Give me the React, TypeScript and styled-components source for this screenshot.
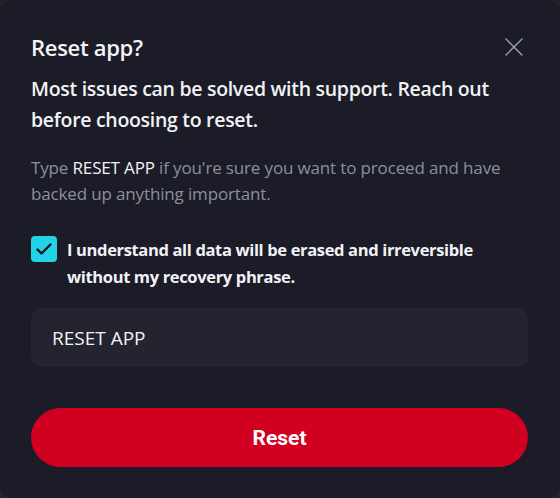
import React, { useState } from "react";
import styled, { createGlobalStyle } from "styled-components";

const Global = createGlobalStyle`
  html, body { margin: 0; padding: 0; background: #23242d; }
  body { font-family: "Open Sans", "Noto Sans", sans-serif; }
  * { box-sizing: border-box; }
`;

const Dialog = styled.div`
  width: 560px;
  height: 498px;
  background: #1b1c28;
  border-radius: 12px;
  padding: 30px 32px 30px 31px;
  display: flex;
  flex-direction: column;
  color: #f2f2f4;
`;

const Header = styled.div`
  display: flex;
  align-items: center;
  justify-content: space-between;
  height: 34px;
`;

const Title = styled.h2`
  margin: 0;
  font-size: 22px;
  font-weight: 600;
  letter-spacing: -0.3px;
  color: #f4f4f6;
`;

const CloseButton = styled.button`
  background: none;
  border: none;
  padding: 0;
  width: 22px;
  height: 22px;
  display: flex;
  align-items: center;
  justify-content: center;
  cursor: pointer;
  color: #9ca0ae;
  margin-right: 3px;
`;

const Lead = styled.p`
  margin: 9px 0 0;
  font-size: 19.5px;
  font-weight: 600;
  line-height: 31px;
  letter-spacing: -0.3px;
  color: #f2f2f4;
`;

const Hint = styled.p`
  margin: 20px 0 0;
  font-size: 17px;
  line-height: 26px;
  letter-spacing: -0.15px;
  color: #8c8f9e;
`;

const Strong = styled.span`
  color: #f2f2f4;
`;

const CheckRow = styled.label`
  margin-top: 29px;
  display: flex;
  gap: 10px;
  align-items: flex-start;
  cursor: pointer;
`;

const Box = styled.span<{ $checked: boolean }>`
  flex: none;
  width: 26px;
  height: 26px;
  border-radius: 4px;
  background: ${(p) => (p.$checked ? "#22d3e8" : "transparent")};
  border: ${(p) => (p.$checked ? "none" : "2px solid #8c8f9e")};
  display: flex;
  align-items: center;
  justify-content: center;
`;

const CheckLabel = styled.span`
  padding-right: 24px;
  font-size: 16.5px;
  font-weight: 700;
  line-height: 27px;
  letter-spacing: -0.35px;
  color: #f2f2f4;
`;

const Input = styled.input`
  margin-top: 18px;
  width: 100%;
  height: 59px;
  border: none;
  outline: none;
  border-radius: 10px;
  background: #232430;
  padding: 0 21px;
  font-family: "Open Sans", "Noto Sans", sans-serif;
  font-size: 19px;
  color: #f2f2f4;
`;

const ResetButton = styled.button`
  margin-top: 41px;
  width: 100%;
  height: 59px;
  border: none;
  border-radius: 30px;
  background: #d20020;
  color: #ffffff;
  font-family: Roboto, "Noto Sans", sans-serif;
  font-size: 21px;
  font-weight: 700;
  cursor: pointer;
`;

export default function App() {
  const [checked, setChecked] = useState(true);
  const [value, setValue] = useState("RESET APP");
  return (
    <>
      <Global />
      <Dialog>
        <Header>
          <Title>Reset app?</Title>
          <CloseButton aria-label="Close">
            <svg width="18" height="18" viewBox="0 0 18 18" fill="none" stroke="currentColor" strokeWidth="1.4" strokeLinecap="round">
              <path d="M1 1L17 17M17 1L1 17" />
            </svg>
          </CloseButton>
        </Header>
        <Lead>Most issues can be solved with support. Reach out before choosing to reset.</Lead>
        <Hint>
          Type <Strong>RESET APP</Strong> if you're sure you want to proceed and have backed up anything important.
        </Hint>
        <CheckRow onClick={() => setChecked(!checked)}>
          <Box $checked={checked}>
            {checked && (
              <svg width="26" height="26" viewBox="0 0 26 26" fill="none" stroke="#111318" strokeWidth="2.4" strokeLinecap="round" strokeLinejoin="round">
                <path d="M6.5 13.5L10.5 17.5L19.5 8.5" />
              </svg>
            )}
          </Box>
          <CheckLabel>I understand all data will be erased and irreversible without my recovery phrase.</CheckLabel>
        </CheckRow>
        <Input value={value} onChange={(e) => setValue(e.target.value)} />
        <ResetButton>Reset</ResetButton>
      </Dialog>
    </>
  );
}
